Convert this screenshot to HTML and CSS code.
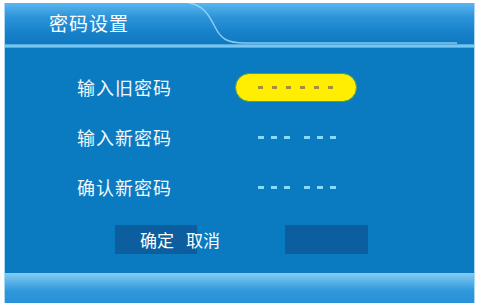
FILE: index.html
```html
<!DOCTYPE html>
<html lang="zh">
<head>
<meta charset="utf-8">
<link rel="stylesheet" href="styles.css">
</head>
<body>
<div class="frame">
  <div class="header">
    <svg class="curve" width="470" height="44" viewBox="0 0 470 44">
      <path d="M184 0 C198 2 204 12 210 24 C216 36 222 40 240 40 L452 40" fill="none" stroke="#9fd8f6" stroke-width="1.5" opacity="0.85"/>
    </svg>
    <div class="title">密码设置</div>
  </div>
  <div class="sep"></div>
  <div class="main">
    <div class="row">
      <div class="label">输入旧密码</div>
      <div class="pill">
        <span class="dot"></span><span class="dot"></span><span class="dot"></span><span class="dot"></span><span class="dot"></span><span class="dot"></span>
      </div>
    </div>
    <div class="row">
      <div class="label">输入新密码</div>
      <div class="dashes">
        <span class="dash"></span><span class="dash"></span><span class="dash"></span><span class="gap"></span><span class="dash"></span><span class="dash"></span><span class="dash"></span>
      </div>
    </div>
    <div class="row">
      <div class="label">确认新密码</div>
      <div class="dashes">
        <span class="dash"></span><span class="dash"></span><span class="dash"></span><span class="gap"></span><span class="dash"></span><span class="dash"></span><span class="dash"></span>
      </div>
    </div>
    <div class="buttons">
      <div class="btn btn-ok"><span>确定</span><span class="cancel-text">取消</span></div>
      <div class="btn btn-cancel"></div>
    </div>
  </div>
  <div class="footer"></div>
</div>
</body>
</html>
```
FILE: styles.css
```css
html, body {
  margin: 0;
  padding: 0;
  background: #ffffff;
}
body {
  width: 479px;
  height: 306px;
  overflow: hidden;
  font-family: "Noto Sans CJK SC", "Noto Sans", sans-serif;
}
.frame {
  margin: 3px 4px 0 4px;
  width: 469px;
  height: 300px;
  display: flex;
  flex-direction: column;
  border-left: 1px solid #a8d8f4;
  border-right: 1px solid #a8d8f4;
  background: #0b7bc1;
}
.header {
  position: relative;
  height: 41px;
  background: linear-gradient(180deg, #5ab6ee 0%, #2c93d8 35%, #1580c8 75%, #0f79c0 100%);
  display: flex;
  align-items: center;
}
.curve {
  position: absolute;
  left: 0;
  top: 0;
}
.title {
  position: relative;
  margin-left: 44px;
  margin-top: -2px;
  color: #ffffff;
  font-size: 19px;
  letter-spacing: 1px;
}
.sep {
  height: 4px;
  background: linear-gradient(180deg, #3b9fdc 0%, #8fd2f4 50%, #3a9edc 100%);
}
.main {
  flex: 1;
  display: flex;
  flex-direction: column;
  padding: 24px 0 0 0;
  gap: 20px;
}
.row {
  display: flex;
  align-items: center;
  height: 30px;
}
.label {
  width: 158px;
  padding-left: 72px;
  color: #f2f8fc;
  font-size: 18px;
  letter-spacing: 1px;
}
.pill {
  width: 98px;
  height: 27px;
  border-radius: 15px;
  background: #ffee00;
  border: 1px solid #5e9a4a;
  display: flex;
  align-items: center;
  box-sizing: content-box;
  padding-left: 22px;
  gap: 9px;
}
.dot {
  width: 5px;
  height: 3px;
  background: #a48c3a;
}
.dashes {
  margin-left: 23px;
  display: flex;
  align-items: center;
  gap: 7px;
  margin-top: 1px;
}
.dash {
  width: 6px;
  height: 3px;
  background: #86dcff;
}
.gap {
  width: 0;
}
.buttons {
  display: flex;
  margin-top: 3px;
  height: 29px;
}
.btn {
  height: 29px;
  background: #0c5e9e;
}
.btn-ok {
  margin-left: 110px;
  width: 82px;
  box-sizing: border-box;
  padding-left: 25px;
  white-space: nowrap;
  color: #ffffff;
  font-size: 17px;
  line-height: 29px;
  display: flex;
  overflow: visible;
}
.cancel-text {
  margin-left: 12px;
}
.btn-cancel {
  margin-left: 88px;
  width: 83px;
}
.footer {
  height: 30px;
  background: linear-gradient(180deg, #84cdf2 0%, #5fb6ea 25%, #2f97dc 60%, #2790d8 100%);
}
```
